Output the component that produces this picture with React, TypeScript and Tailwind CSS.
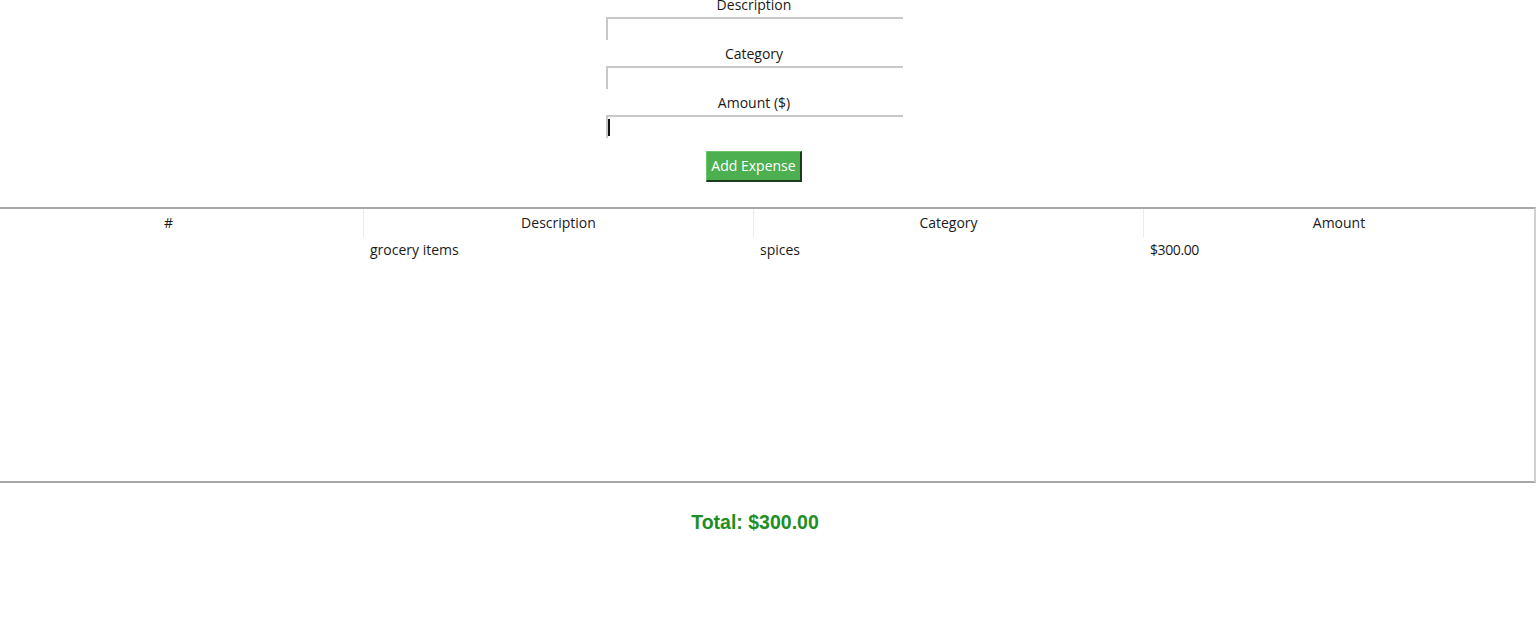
import React from "react";

const font = { fontFamily: '"Open Sans", "Noto Sans", "DejaVu Sans", sans-serif' };

function Field({ label, first, cursor }: { label: string; first?: boolean; cursor?: boolean }) {
  return (
    <div className={`flex flex-col items-center ${first ? "-mt-[4px]" : "mt-[5px]"}`}>
      <div className="h-[17px] leading-[17px] text-[14px] text-[#1a1a1a]">{label}</div>
      <div className="mt-[4px] w-[297px] h-[23px] border-t-2 border-l-2 border-t-[#c8c8c8] border-l-[#c8c8c8] bg-white flex items-center">
        {cursor && <div className="w-[2px] h-[17px] bg-[#111]" />}
      </div>
    </div>
  );
}

export default function App() {
  const cols = ["#", "Description", "Category", "Amount"];
  return (
    <div className="w-[1536px] h-[623px] bg-white overflow-hidden" style={font}>
      <div className="flex flex-col items-center pr-[28px]">
        <Field label="Description" first />
        <Field label="Category" />
        <Field label="Amount ($)" cursor />
        <button className="mt-[13px] w-[96px] h-[31px] bg-[#4caf50] text-white text-[14px] border border-t-[#6cc46f] border-l-[#6cc46f] border-b-2 border-r-2 border-b-[#1d3a1e] border-r-[#1d3a1e] leading-none">
          Add Expense
        </button>
      </div>
      <div className="mt-[25px] h-[276px] border-t-2 border-b-2 border-r-2 border-t-[#a8a8a8] border-b-[#a8a8a8] border-r-[#d0d0d0] text-[14px] text-[#1a1a1a]">
        <div className="grid grid-cols-[363px_390px_390px_1fr] h-[28px]">
          {cols.map((c, i) => (
            <div
              key={c}
              className={`flex items-center justify-center pb-[2px] ${i > 0 ? "border-l border-l-[#ececec]" : "pr-[26px]"}`}
            >
              {c}
            </div>
          ))}
        </div>
        <div className="grid grid-cols-[363px_390px_390px_1fr] h-[25px]">
          <div />
          <div className="pl-[7px] flex items-center">grocery items</div>
          <div className="pl-[7px] flex items-center">spices</div>
          <div className="pl-[7px] flex items-center tracking-[-0.4px]">$300.00</div>
        </div>
      </div>
      <div
        className="mt-[25px] pr-[26px] text-center text-[19.5px] font-bold text-[#1f8f23]"
        style={{ fontFamily: '"Liberation Sans", Arial, sans-serif' }}
      >
        Total: $300.00
      </div>
    </div>
  );
}
